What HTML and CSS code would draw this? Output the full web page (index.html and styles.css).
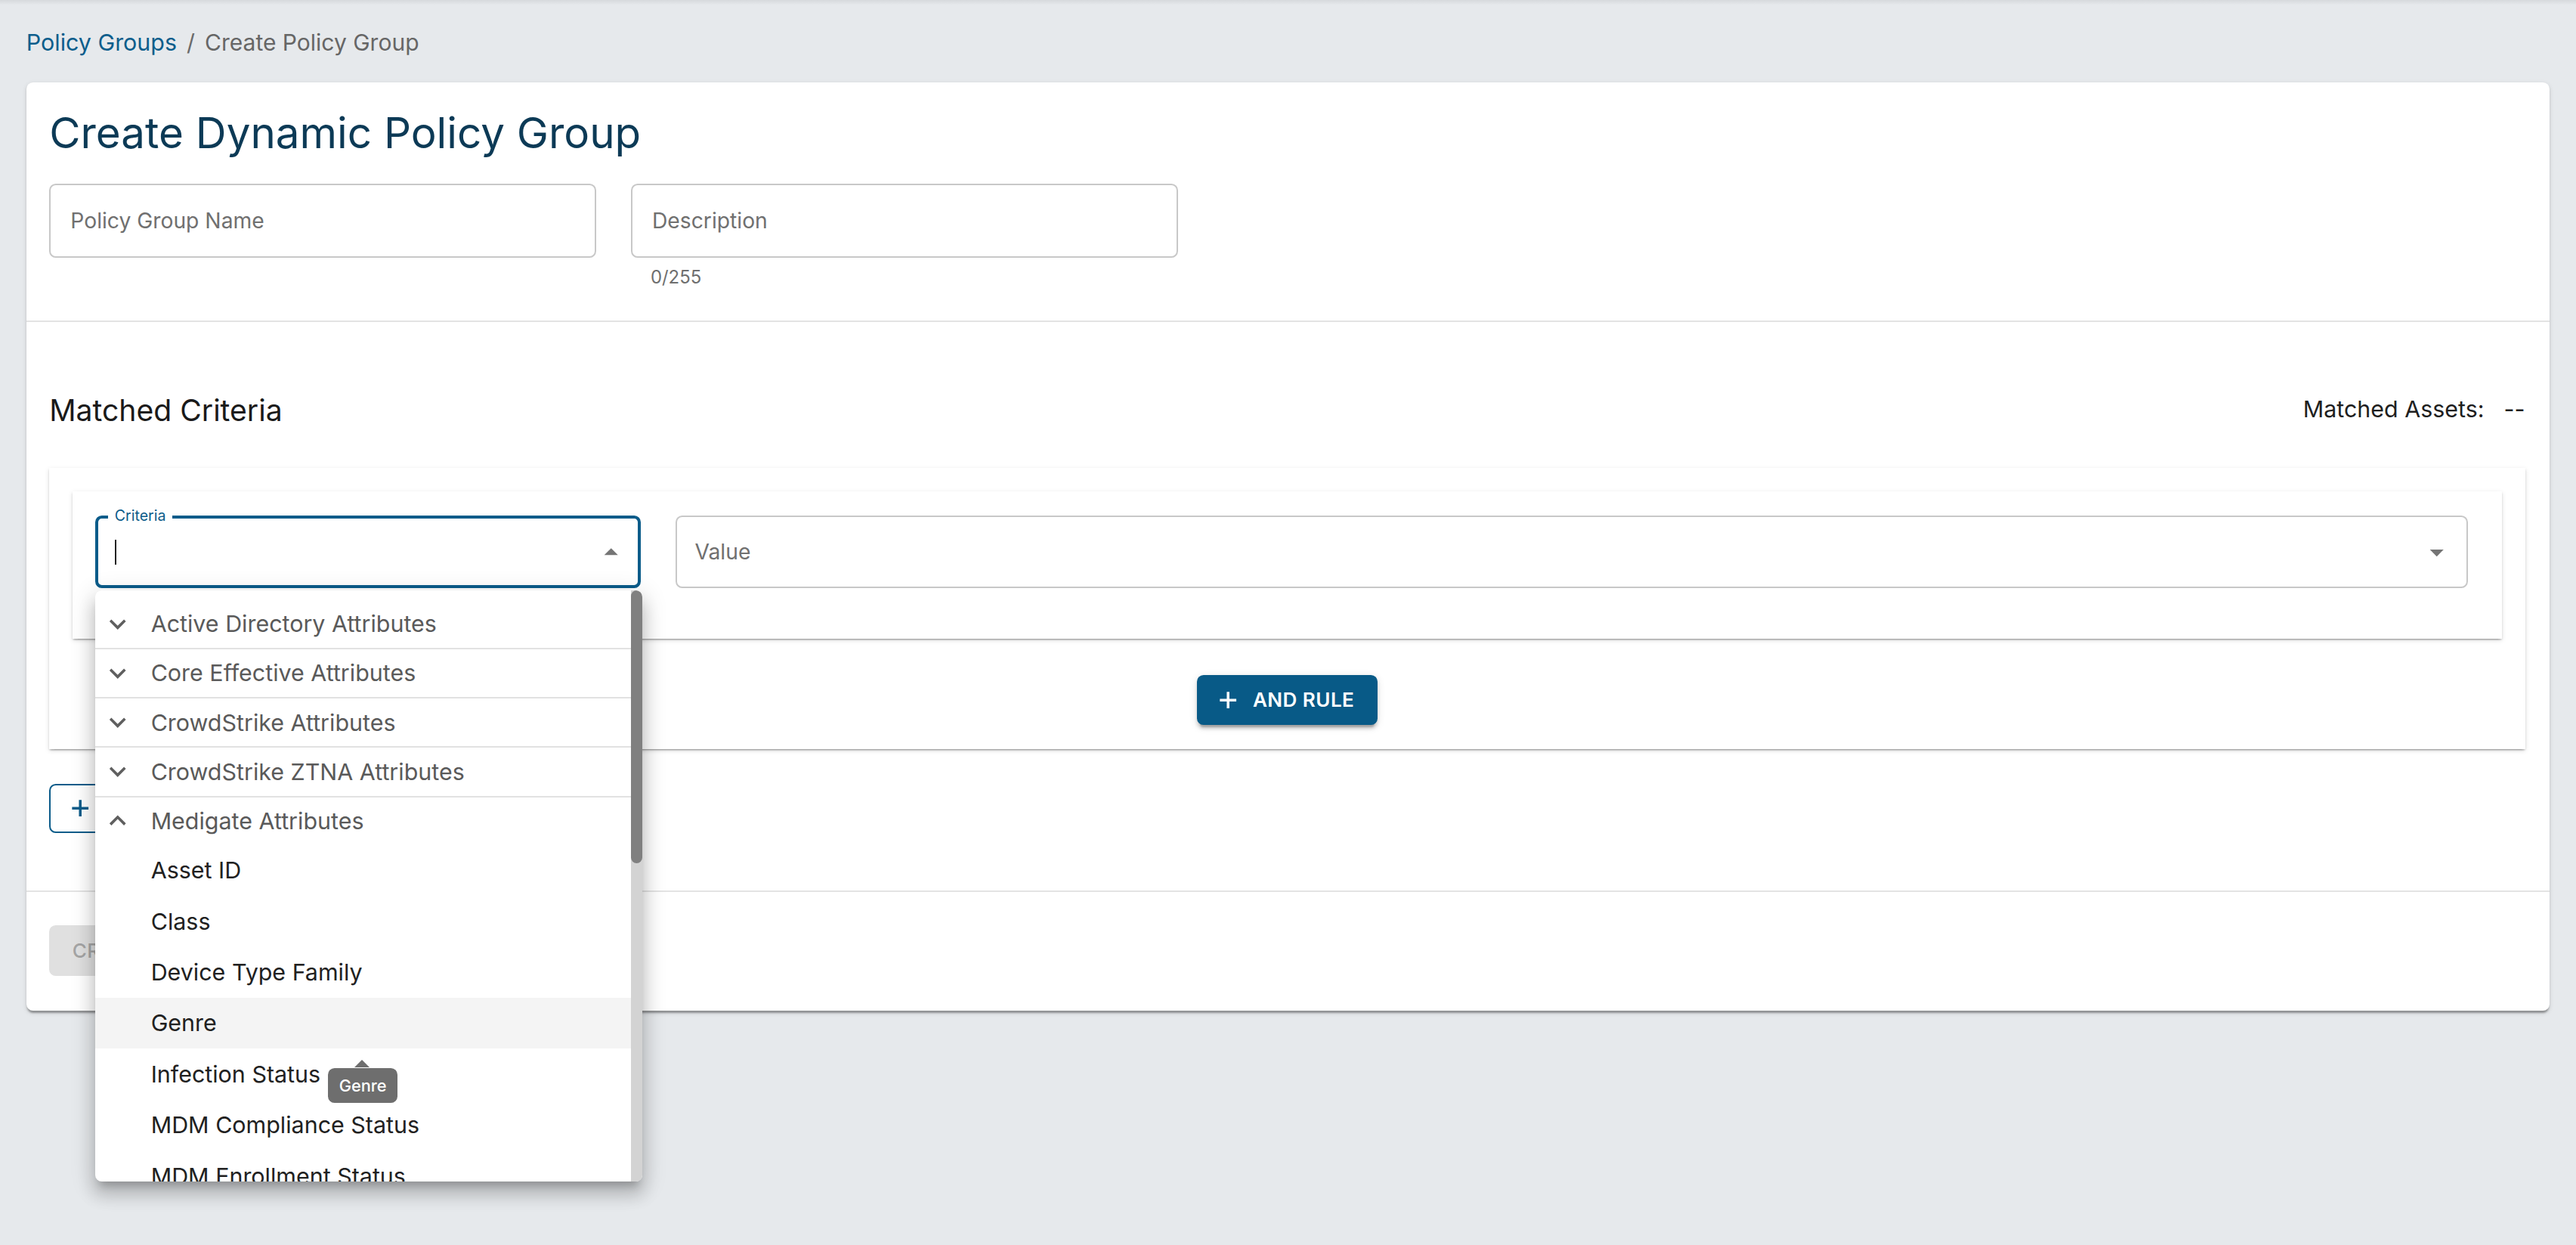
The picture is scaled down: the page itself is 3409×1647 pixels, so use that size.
FILE: index.html
```html
<!DOCTYPE html>
<html lang="en">
<head>
<meta charset="utf-8">
<title>Create Dynamic Policy Group</title>
<link rel="stylesheet" href="styles.css">
</head>
<body>
<nav class="breadcrumb">
  <a class="crumb-link">Policy Groups</a>
  <span class="crumb-sep">/</span>
  <span class="crumb-current">Create Policy Group</span>
</nav>

<main class="card">
  <section class="card-head">
    <h1 class="title">Create Dynamic Policy Group</h1>
    <div class="field-row">
      <div class="field-col">
        <div class="text-field"><span class="placeholder">Policy Group Name</span></div>
      </div>
      <div class="field-col">
        <div class="text-field"><span class="placeholder">Description</span></div>
        <div class="helper">0/255</div>
      </div>
    </div>
  </section>

  <section class="criteria-section">
    <div class="criteria-head">
      <h2 class="section-title">Matched Criteria</h2>
      <div class="assets"><span>Matched Assets:</span><span class="assets-value">--</span></div>
    </div>

    <div class="rule-panel">
      <div class="rule-card">
        <div class="select select-focused criteria-select">
          <span class="float-label">Criteria</span>
          <span class="input-area"><span class="text-caret"></span></span>
          <svg class="select-arrow" viewBox="0 0 24 24" width="20" height="20"><path d="M7 14l5-5 5 5z" fill="#757575"/></svg>

          <div class="dropdown">
            <div class="dropdown-list">
              <div class="group-row">
                <svg class="chev" viewBox="0 0 24 24" width="20" height="20"><path d="M16.59 8.59 12 13.17 7.41 8.59 6 10l6 6 6-6z" fill="#5f5f5f"/></svg>
                <span>Active Directory Attributes</span>
              </div>
              <div class="group-row">
                <svg class="chev" viewBox="0 0 24 24" width="20" height="20"><path d="M16.59 8.59 12 13.17 7.41 8.59 6 10l6 6 6-6z" fill="#5f5f5f"/></svg>
                <span>Core Effective Attributes</span>
              </div>
              <div class="group-row">
                <svg class="chev" viewBox="0 0 24 24" width="20" height="20"><path d="M16.59 8.59 12 13.17 7.41 8.59 6 10l6 6 6-6z" fill="#5f5f5f"/></svg>
                <span>CrowdStrike Attributes</span>
              </div>
              <div class="group-row">
                <svg class="chev" viewBox="0 0 24 24" width="20" height="20"><path d="M16.59 8.59 12 13.17 7.41 8.59 6 10l6 6 6-6z" fill="#5f5f5f"/></svg>
                <span>CrowdStrike ZTNA Attributes</span>
              </div>
              <div class="group-row group-open">
                <svg class="chev" viewBox="0 0 24 24" width="20" height="20"><path d="M12 8l-6 6 1.41 1.41L12 10.83l4.59 4.58L18 14z" fill="#5f5f5f"/></svg>
                <span>Medigate Attributes</span>
              </div>
              <div class="option">Asset ID</div>
              <div class="option">Class</div>
              <div class="option">Device Type Family</div>
              <div class="option option-hover">Genre</div>
              <div class="option">Infection Status</div>
              <div class="option">MDM Compliance Status</div>
              <div class="option">MDM Enrollment Status</div>
            </div>
            <div class="scroll-track"><div class="scroll-thumb"></div></div>
            <div class="tooltip">Genre</div>
          </div>
        </div>

        <div class="select value-select">
          <span class="placeholder">Value</span>
          <svg class="select-arrow" viewBox="0 0 24 24" width="20" height="20"><path d="M7 10l5 5 5-5z" fill="#757575"/></svg>
        </div>
      </div>

      <div class="and-row">
        <button class="btn-primary">
          <svg viewBox="0 0 14 14" width="14" height="14"><path d="M7 2v10M2 7h10" stroke="#fff" stroke-width="1.6"/></svg>
          <span>AND RULE</span>
        </button>
      </div>
    </div>

    <button class="btn-outline">
      <svg viewBox="0 0 14 14" width="14" height="14"><path d="M7 2v10M2 7h10" stroke="#0b5c8a" stroke-width="1.6"/></svg>
      <span>OR RULE</span>
    </button>
  </section>

  <footer class="card-foot">
    <button class="btn-disabled">CREATE</button>
  </footer>
</main>
</body>
</html>
```

FILE: styles.css
```css
html {
  zoom: 2.17411;
  background: #e6e9ec;
}

body {
  margin: 0;
  min-height: 757px;
  box-sizing: border-box;
  padding: 0 16px 40px;
  font-family: Inter, "Noto Sans", "Liberation Sans", sans-serif;
  color: #1f1f1f;
  background: linear-gradient(to bottom, #d6d9dc 0, #e6e9ec 3px) no-repeat;
}

.breadcrumb {
  display: flex;
  align-items: center;
  height: 20px;
  padding-top: 16px;
  margin-bottom: 14px;
  font-size: 14px;
  line-height: 20px;
}

.crumb-link {
  color: #0d5e8c;
}

.crumb-sep {
  color: #6b6b6b;
  margin: 0 6px;
}

.crumb-current {
  color: #666666;
  font-size: 13.8px;
}

.card {
  display: block;
  background: #ffffff;
  border-radius: 4px;
  box-shadow: 0 2px 1px -1px rgba(0, 0, 0, 0.2), 0 1px 1px 0 rgba(0, 0, 0, 0.14), 0 1px 3px 0 rgba(0, 0, 0, 0.12);
}

.card-head {
  padding: 15px 14px 19px;
  border-bottom: 1px solid #e3e3e3;
}

.title {
  margin: 0;
  font-size: 26px;
  line-height: 32px;
  font-weight: 400;
  color: #0c3a56;
}

.field-row {
  display: flex;
  gap: 21px;
  margin-top: 15px;
}

.field-col {
  width: 333px;
}

.text-field {
  box-sizing: border-box;
  height: 45px;
  display: flex;
  align-items: center;
  padding: 0 12px;
  border: 1px solid #c8c8c8;
  border-radius: 4px;
}

.placeholder {
  font-size: 13px;
  color: #707070;
}

.helper {
  margin-top: 5px;
  padding-left: 12px;
  font-size: 11px;
  line-height: 14px;
  color: #6f6f6f;
}

.criteria-section {
  padding: 42px 15px 35px 14px;
  border-bottom: 1px solid #e3e3e3;
}

.criteria-head {
  display: flex;
  justify-content: space-between;
  align-items: center;
  height: 24px;
}

.section-title {
  margin: 0;
  font-size: 18px;
  line-height: 24px;
  font-weight: 400;
  color: #1a1a1a;
}

.assets {
  display: flex;
  gap: 12px;
  font-size: 14px;
  color: #1f1f1f;
  margin-top: -2px;
}

.rule-panel {
  margin-top: 23px;
  padding: 14px 14px 15px;
  background: #ffffff;
  box-shadow: 0 2px 1px -1px rgba(0, 0, 0, 0.2), 0 1px 1px 0 rgba(0, 0, 0, 0.14), 0 1px 3px 0 rgba(0, 0, 0, 0.12);
}

.rule-card {
  display: flex;
  gap: 21px;
  padding: 15px 21px 31px 14px;
  background: #ffffff;
  box-shadow: 0 2px 1px -1px rgba(0, 0, 0, 0.2), 0 1px 1px 0 rgba(0, 0, 0, 0.14), 0 1px 3px 0 rgba(0, 0, 0, 0.12);
}

.select {
  position: relative;
  box-sizing: border-box;
  height: 44px;
  display: flex;
  align-items: center;
  border: 1px solid #c8c8c8;
  border-radius: 4px;
  padding: 0 8px 0 11px;
}

.criteria-select {
  width: 332px;
  flex: none;
}

.value-select {
  flex: 1;
}

.select-focused {
  border: 2px solid #0b5c8a;
  padding: 0 6px 0 10px;
}

.input-area {
  flex: 1;
  display: flex;
  align-items: center;
  height: 100%;
}

.text-caret {
  width: 1px;
  height: 15px;
  background: #222;
}

.value-select .placeholder {
  flex: 1;
}

.float-label {
  position: absolute;
  left: 6px;
  top: -8px;
  padding: 0 4px 0 4px;
  background: #ffffff;
  font-size: 9px;
  line-height: 12px;
  color: #0b5c8a;
}

.select-arrow {
  flex: none;
  display: block;
}

.dropdown {
  position: absolute;
  left: -2px;
  top: calc(100% + 3px);
  width: 333px;
  height: 360px;
  display: flex;
  background: #ffffff;
  border-radius: 4px;
  overflow: hidden;
  z-index: 10;
  box-shadow: 0 5px 5px -3px rgba(0, 0, 0, 0.2), 0 8px 10px 1px rgba(0, 0, 0, 0.14), 0 3px 14px 2px rgba(0, 0, 0, 0.12);
}

.dropdown-list {
  flex: 1;
  padding-top: 6px;
  overflow: hidden;
}

.group-row {
  box-sizing: border-box;
  height: 30px;
  display: flex;
  align-items: center;
  gap: 10px;
  padding-left: 4px;
  border-bottom: 1px solid #e2e2e2;
  font-size: 14px;
  color: #5a5a5a;
}

.group-row.group-open {
  border-bottom: none;
  height: 29px;
}

.chev {
  display: block;
  flex: none;
}

.option {
  height: 31px;
  display: flex;
  align-items: center;
  padding-left: 34px;
  font-size: 14px;
  color: #212121;
}

.option-hover {
  background: #f4f4f4;
}

.scroll-track {
  width: 7px;
  flex: none;
  background: #d3d3d3;
}

.scroll-thumb {
  height: 166px;
  background: #808080;
  border-radius: 4px;
}

.tooltip {
  position: absolute;
  left: 142px;
  top: 291px;
  width: 42px;
  height: 21px;
  display: flex;
  align-items: center;
  justify-content: center;
  background: #6e6e6e;
  border-radius: 4px;
  font-size: 10px;
  font-weight: 500;
  color: #ffffff;
}

.tooltip::before {
  content: "";
  position: absolute;
  top: -5px;
  left: 16px;
  border-left: 5px solid transparent;
  border-right: 5px solid transparent;
  border-bottom: 5px solid #6e6e6e;
}

.and-row {
  display: flex;
  justify-content: center;
  margin-top: 22px;
}

.btn-primary,
.btn-outline,
.btn-disabled {
  box-sizing: border-box;
  display: flex;
  align-items: center;
  gap: 8px;
  border-radius: 4px;
  font-family: Inter, "Noto Sans", "Liberation Sans", sans-serif;
  font-size: 12px;
  font-weight: 600;
  letter-spacing: 0.2px;
  cursor: pointer;
}

.btn-primary {
  height: 30px;
  padding: 0 14px 0 12px;
  border: none;
  background: #085a87;
  color: #ffffff;
  box-shadow: 0 3px 1px -2px rgba(0, 0, 0, 0.2), 0 2px 2px 0 rgba(0, 0, 0, 0.14), 0 1px 5px 0 rgba(0, 0, 0, 0.12);
}

.btn-outline {
  height: 30px;
  margin-top: 21px;
  padding: 0 14px 0 11px;
  border: 1px solid #0b5c8a;
  background: #ffffff;
  color: #0b5c8a;
}

.card-foot {
  padding: 20px 14px 21px;
}

.btn-disabled {
  height: 31px;
  padding: 0 14px;
  border: none;
  background: #e0e0e0;
  color: #a5a5a5;
  font-weight: 500;
}
```
